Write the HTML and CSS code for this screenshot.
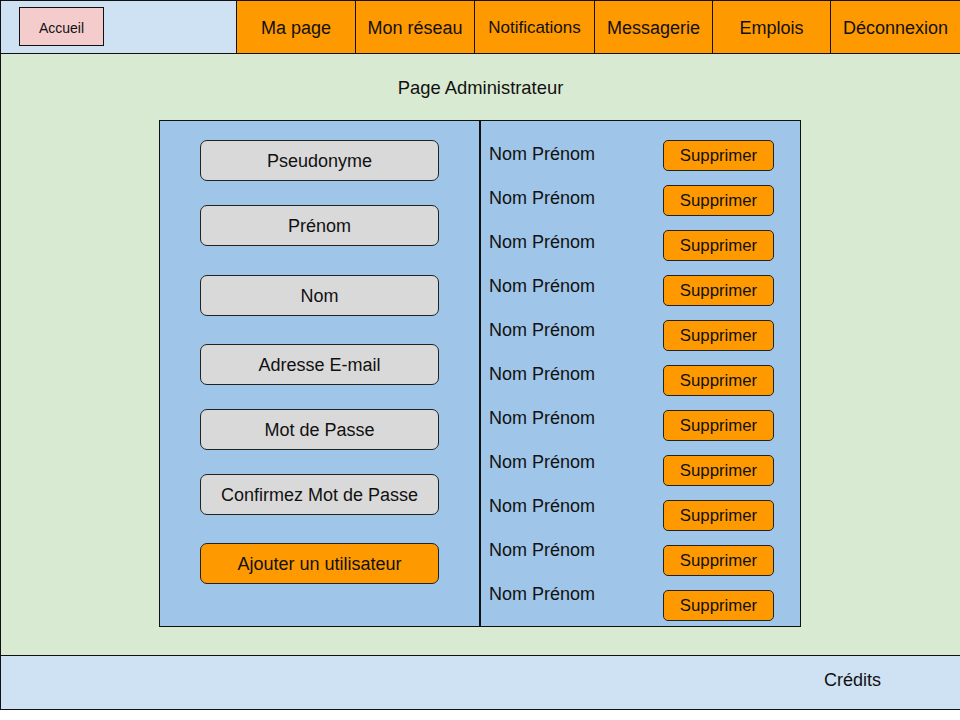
FILE: index.html
```html
<!DOCTYPE html>
<html lang="fr">
<head>
<meta charset="utf-8">
<title>Page Administrateur</title>
<link rel="stylesheet" href="styles.css">
</head>
<body>
<div class="page">
  <header class="topbar">
    <div class="home-zone"><span class="home-btn">Accueil</span></div>
    <nav class="tabs">
      <span class="tab tab-a">Ma page</span>
      <span class="tab tab-a">Mon réseau</span>
      <span class="tab tab-b small">Notifications</span>
      <span class="tab tab-c">Messagerie</span>
      <span class="tab tab-c">Emplois</span>
      <span class="tab tab-d">Déconnexion</span>
    </nav>
  </header>
  <main class="main">
    <h1 class="title">Page Administrateur</h1>
    <section class="board">
      <div class="form-panel">
        <div class="field">Pseudonyme</div>
        <div class="field">Prénom</div>
        <div class="field gap-lg">Nom</div>
        <div class="field gap-md">Adresse E-mail</div>
        <div class="field">Mot de Passe</div>
        <div class="field">Confirmez Mot de Passe</div>
        <div class="field add gap-md">Ajouter un utilisateur</div>
      </div>
      <div class="list-panel">
        <ul class="names">
          <li>Nom Prénom</li><li>Nom Prénom</li><li>Nom Prénom</li><li>Nom Prénom</li>
          <li>Nom Prénom</li><li>Nom Prénom</li><li>Nom Prénom</li><li>Nom Prénom</li>
          <li>Nom Prénom</li><li>Nom Prénom</li><li>Nom Prénom</li>
        </ul>
        <div class="actions">
          <span class="del">Supprimer</span><span class="del">Supprimer</span><span class="del">Supprimer</span>
          <span class="del">Supprimer</span><span class="del">Supprimer</span><span class="del">Supprimer</span>
          <span class="del">Supprimer</span><span class="del">Supprimer</span><span class="del">Supprimer</span>
          <span class="del">Supprimer</span><span class="del">Supprimer</span>
        </div>
      </div>
    </section>
  </main>
  <footer class="footer"><span class="credits">Crédits</span></footer>
</div>
</body>
</html>
```

FILE: styles.css
```css
* { box-sizing: border-box; }
html, body { margin: 0; padding: 0; background: #ffffff; }
body {
  font-family: "Liberation Sans", Arial, sans-serif;
  color: #111;
}
.page {
  width: 960px;
  border-left: 1px solid #111;
}
.topbar {
  display: flex;
  height: 54px;
  border-top: 1px solid #111;
  border-bottom: 1px solid #111;
}
.home-zone {
  width: 235px;
  background: #cfe2f3;
  padding: 6px 0 0 18px;
}
.home-btn {
  display: flex;
  align-items: center;
  justify-content: center;
  width: 85px;
  height: 39px;
  background: #f4cccc;
  border: 1px solid #111;
  font-size: 14px;
  padding-top: 2px;
}
.tabs {
  display: flex;
  flex: 1;
}
.tab {
  display: flex;
  align-items: center;
  justify-content: center;
  background: #ff9900;
  border-left: 1px solid #111;
  font-size: 18px;
  padding-top: 2px;
}
.tab.small { font-size: 17px; padding-top: 1px; }
.tab-a { width: 119px; }
.tab-b { width: 120px; }
.tab-c { width: 118px; }
.tab-d { flex: 1; }
.main {
  height: 601px;
  background: #d9ead3;
  padding-top: 24px;
}
.title {
  margin: 0 0 22px;
  font-size: 18.4px;
  font-weight: normal;
  line-height: 20px;
  text-align: center;
}
.board {
  display: flex;
  width: 642px;
  height: 507px;
  margin-left: 158px;
  border: 1px solid #111;
  background: #9fc5e8;
}
.form-panel {
  width: 321px;
  border-right: 2px solid #111;
  padding: 19px 0 0 40px;
  display: flex;
  flex-direction: column;
}
.field {
  width: 239px;
  height: 41px;
  margin-bottom: 24px;
  background: #d9d9d9;
  border: 1px solid #222;
  border-radius: 7px;
  display: flex;
  align-items: center;
  justify-content: center;
  font-size: 18px;
  padding-top: 2px;
}
.field.gap-lg { margin-top: 5px; }
.field.gap-md { margin-top: 4px; }
.field.add { background: #ff9900; }
.list-panel {
  flex: 1;
  display: flex;
  padding-left: 8px;
}
.names {
  list-style: none;
  margin: 0;
  padding: 11px 0 0;
  width: 174px;
  font-size: 18px;
  line-height: 44px;
}
.actions {
  display: flex;
  flex-direction: column;
  gap: 14px;
  padding-top: 19px;
}
.del {
  width: 111px;
  height: 31px;
  background: #ff9900;
  border: 1px solid #222;
  border-radius: 5px;
  display: flex;
  align-items: center;
  justify-content: center;
  font-size: 16.8px;
  padding-top: 1px;
}
.footer {
  height: 55px;
  background: #cfe2f3;
  border-top: 1px solid #111;
  border-bottom: 1px solid #111;
  display: flex;
  align-items: center;
  justify-content: flex-end;
  padding: 0 79px 4px 0;
}
.credits { font-size: 18px; }
```
